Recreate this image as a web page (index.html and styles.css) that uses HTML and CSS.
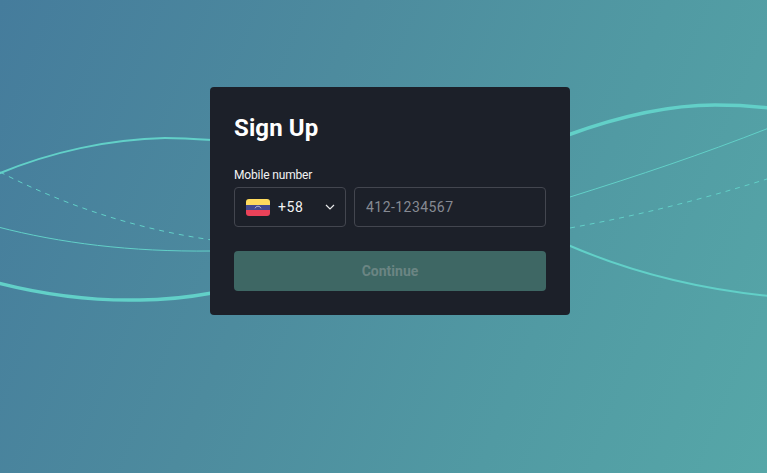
FILE: index.html
```html
<!DOCTYPE html>
<html lang="en">
<head>
<meta charset="utf-8">
<title>Sign Up</title>
<link rel="stylesheet" href="styles.css">
</head>
<body>
<div class="page">
  <svg class="waves" viewBox="0 0 767 473" width="767" height="473" aria-hidden="true">
    <g fill="none" stroke="#62d0c8">
      <path class="w2" d="M-2 174C50 152 110 139 165 138C182 138 197 139 212 140"/>
      <path class="w3" d="M568 135C620 116 670 105 715 105C735 105 752 106 769 108"/>
      <path class="w1 dash" d="M0 172C60 203 130 228 212 240M570 228C640 215 700 200 767 179"/>
      <path class="w1" d="M-2 227C60 243 130 252 212 251M570 197C640 175 700 155 769 128"/>
      <path class="w3b" d="M-2 283C45 295 95 301 140 300C165 300 190 297 212 293"/>
      <path class="w2" d="M568 245C630 272 700 289 769 296"/>
    </g>
  </svg>
  <main class="card">
    <h1 class="title">Sign Up</h1>
    <label class="label" for="phone">Mobile number</label>
    <div class="row">
      <button class="country" type="button">
        <svg class="flag" viewBox="0 0 24 17" width="24" height="17" aria-hidden="true">
          <path fill="#ffdb5e" d="M3 0h18a3 3 0 0 1 3 3v3H0V3a3 3 0 0 1 3-3z"/>
          <path fill="#434a8f" d="M0 6h24v5.500H0z"/>
          <path fill="#ea4259" d="M0 11h24v3a3 3 0 0 1-3 3H3a3 3 0 0 1-3-3z"/>
          <path fill="none" stroke="#d8d8e8" stroke-width=".7" d="M9 9.300a3.200 3.200 0 0 1 6 0"/>
        </svg>
        <span class="code">+58</span>
        <svg class="chev" viewBox="0 0 10 6" width="10" height="6" aria-hidden="true">
          <path fill="none" stroke="#e8e9ea" stroke-width="1.200" d="M1 1l4 4 4-4"/>
        </svg>
      </button>
      <input class="phone" id="phone" type="text" placeholder="412-1234567">
    </div>
    <button class="submit" type="button">Continue</button>
  </main>
</div>
</body>
</html>
```
FILE: styles.css
```css
html, body {
  margin: 0;
  padding: 0;
  height: 100%;
}
body {
  font-family: Roboto, "Liberation Sans", sans-serif;
  overflow: hidden;
}
.page {
  position: relative;
  width: 767px;
  height: 473px;
  overflow: hidden;
  display: flex;
  align-items: flex-start;
  background: linear-gradient(112deg, #457c9c 0%, #4d8b9e 38%, #519aa3 70%, #56a7a8 100%);
}
.waves {
  position: absolute;
  left: 0;
  top: 0;
}
.w1 { stroke-width: 1; }
.dash { stroke-dasharray: 5 5; }
.w2 { stroke-width: 2; }
.w3 { stroke-width: 3.500; }
.w3b { stroke-width: 3.500; }
.card {
  position: relative;
  box-sizing: border-box;
  width: 360px;
  height: 228px;
  margin: 87px 0 0 210px;
  padding: 24px;
  background: #1c2029;
  border-radius: 4px;
  display: flex;
  flex-direction: column;
}
.title {
  margin: 0 0 22px;
  font-size: 24px;
  line-height: 34px;
  font-weight: 700;
  letter-spacing: .1px;
  color: #fff;
}
.label {
  margin-bottom: 4px;
  font-size: 12px;
  line-height: 16px;
  letter-spacing: -.15px;
  color: #f2f3f4;
}
.row {
  display: flex;
  flex: none;
  gap: 8px;
  margin-bottom: 24px;
}
.country {
  box-sizing: border-box;
  width: 112px;
  height: 40px;
  padding: 0 10px 0 11px;
  display: flex;
  align-items: center;
  background: transparent;
  border: 1px solid #43464f;
  border-radius: 4px;
  font-family: inherit;
  cursor: pointer;
}
.flag { flex: none; }
.code {
  margin-left: 8px;
  font-size: 14px;
  letter-spacing: .6px;
  color: #f2f3f4;
}
.chev {
  margin-left: auto;
  flex: none;
}
.phone {
  box-sizing: border-box;
  width: 192px;
  height: 40px;
  padding: 0 11px;
  background: transparent;
  border: 1px solid #43464f;
  border-radius: 4px;
  font-family: inherit;
  font-size: 14px;
  letter-spacing: .45px;
  color: #f2f3f4;
  outline: none;
}
.phone::placeholder {
  color: #868a93;
  opacity: 1;
}
.submit {
  flex: none;
  width: 312px;
  height: 40px;
  padding: 0;
  background: #3e6764;
  border: 0;
  border-radius: 4px;
  font-family: inherit;
  font-size: 14px;
  font-weight: 700;
  color: #6b8583;
}
```
